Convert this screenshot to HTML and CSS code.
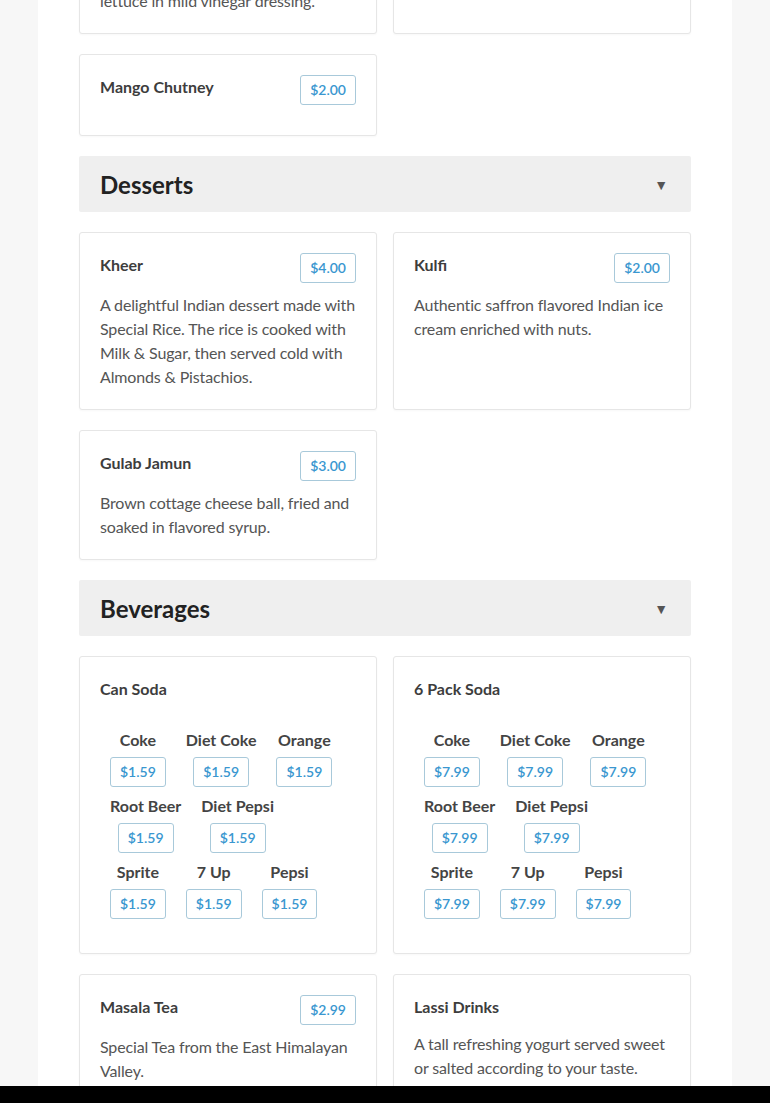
FILE: index.html
```html
<!DOCTYPE html>
<html lang="en">
<head>
<meta charset="utf-8">
<title>Menu</title>
<link rel="stylesheet" href="styles.css">
</head>
<body>
<div class="page">
  <main class="menu">
    <div class="grid">
      <div class="card">
        <div class="card-head"><h3 class="title">Garden Salad</h3><span class="price">$3.99</span></div>
        <p class="desc">Fresh garden vegetables with crisp lettuce in mild vinegar dressing.</p>
      </div>
      <div class="card">
        <div class="card-head"><h3 class="title">Raita</h3><span class="price">$2.00</span></div>
        <p class="desc">Cool yogurt with cucumber.</p>
      </div>
      <div class="card">
        <div class="card-head"><h3 class="title">Mango Chutney</h3><span class="price">$2.00</span></div>
      </div>
    </div>

    <div class="section-head"><h2>Desserts</h2><span class="caret">▼</span></div>
    <div class="grid">
      <div class="card">
        <div class="card-head"><h3 class="title">Kheer</h3><span class="price">$4.00</span></div>
        <p class="desc">A delightful Indian dessert made with Special Rice. The rice is cooked with Milk &amp; Sugar, then served cold with Almonds &amp; Pistachios.</p>
      </div>
      <div class="card">
        <div class="card-head"><h3 class="title">Kulfi</h3><span class="price">$2.00</span></div>
        <p class="desc">Authentic saffron flavored Indian ice cream enriched with nuts.</p>
      </div>
      <div class="card">
        <div class="card-head"><h3 class="title">Gulab Jamun</h3><span class="price">$3.00</span></div>
        <p class="desc">Brown cottage cheese ball, fried and soaked in flavored syrup.</p>
      </div>
    </div>

    <div class="section-head"><h2>Beverages</h2><span class="caret">▼</span></div>
    <div class="grid">
      <div class="card">
        <div class="card-head"><h3 class="title">Can Soda</h3></div>
        <div class="options">
          <div class="opt"><span class="opt-name">Coke</span><span class="price">$1.59</span></div>
          <div class="opt"><span class="opt-name">Diet Coke</span><span class="price">$1.59</span></div>
          <div class="opt"><span class="opt-name">Orange</span><span class="price">$1.59</span></div>
          <div class="opt"><span class="opt-name">Root Beer</span><span class="price">$1.59</span></div>
          <div class="opt"><span class="opt-name">Diet Pepsi</span><span class="price">$1.59</span></div>
          <div class="opt"><span class="opt-name">Sprite</span><span class="price">$1.59</span></div>
          <div class="opt"><span class="opt-name">7 Up</span><span class="price">$1.59</span></div>
          <div class="opt"><span class="opt-name">Pepsi</span><span class="price">$1.59</span></div>
        </div>
      </div>
      <div class="card">
        <div class="card-head"><h3 class="title">6 Pack Soda</h3></div>
        <div class="options">
          <div class="opt"><span class="opt-name">Coke</span><span class="price">$7.99</span></div>
          <div class="opt"><span class="opt-name">Diet Coke</span><span class="price">$7.99</span></div>
          <div class="opt"><span class="opt-name">Orange</span><span class="price">$7.99</span></div>
          <div class="opt"><span class="opt-name">Root Beer</span><span class="price">$7.99</span></div>
          <div class="opt"><span class="opt-name">Diet Pepsi</span><span class="price">$7.99</span></div>
          <div class="opt"><span class="opt-name">Sprite</span><span class="price">$7.99</span></div>
          <div class="opt"><span class="opt-name">7 Up</span><span class="price">$7.99</span></div>
          <div class="opt"><span class="opt-name">Pepsi</span><span class="price">$7.99</span></div>
        </div>
      </div>
      <div class="card">
        <div class="card-head"><h3 class="title">Masala Tea</h3><span class="price">$2.99</span></div>
        <p class="desc">Special Tea from the East Himalayan Valley.</p>
      </div>
      <div class="card">
        <div class="card-head"><h3 class="title">Lassi Drinks</h3></div>
        <p class="desc">A tall refreshing yogurt served sweet or salted according to your taste.</p>
      </div>
    </div>
  </main>
</div>
<div class="bottom-bar"></div>
</body>
</html>
```

FILE: styles.css
```css
html, body {
  margin: 0;
  padding: 0;
}
body {
  background: #f7f7f7;
  font-family: Lato, "Open Sans", "Liberation Sans", sans-serif;
  color: #555;
}
.page {
  width: 694px;
  margin: 0 auto;
  background: #fff;
  min-height: 1200px;
}
.menu {
  margin-top: -96px;
  padding: 0 41px 60px;
}
.grid {
  display: grid;
  grid-template-columns: 298px 298px;
  column-gap: 16px;
  row-gap: 20px;
}
.card {
  border: 1px solid #e6e6e6;
  border-radius: 3px;
  padding: 20px;
  box-shadow: 0 1px 2px rgba(0, 0, 0, 0.03);
  background: #fff;
}
.card-head {
  display: flex;
  justify-content: space-between;
  align-items: flex-start;
  min-height: 27px;
  margin-bottom: 10px;
}
.title {
  margin: 0;
  font-size: 16px;
  line-height: 24px;
  font-weight: 700;
  color: #3d3d3d;
}
.price {
  display: inline-block;
  border: 1px solid #a8c9da;
  border-radius: 3px;
  padding: 5px 9px;
  font-size: 14px;
  line-height: 18px;
  font-weight: 600;
  color: #3a97d0;
  background: #fff;
}
.desc {
  margin: 0;
  font-size: 16px;
  line-height: 24px;
  letter-spacing: -0.15px;
  color: #555;
}
.section-head {
  display: flex;
  justify-content: space-between;
  align-items: center;
  height: 56px;
  margin: 20px 0;
  padding: 0 23px 0 21px;
  background: #efefef;
  border-radius: 2px;
}
.section-head h2 {
  margin: 0;
  font-size: 24px;
  font-weight: 700;
  color: #222;
}
.caret {
  font-size: 14px;
  color: #555;
}
.options {
  display: flex;
  flex-wrap: wrap;
  column-gap: 20px;
  row-gap: 7px;
  padding: 14px 10px 14px;
}
.opt {
  display: flex;
  flex-direction: column;
  align-items: center;
}
.opt-name {
  font-size: 16px;
  line-height: 24px;
  font-weight: 700;
  color: #444;
  margin-bottom: 5px;
}
.bottom-bar {
  position: fixed;
  left: 0;
  right: 0;
  bottom: 0;
  height: 17px;
  background: #000;
}
```
